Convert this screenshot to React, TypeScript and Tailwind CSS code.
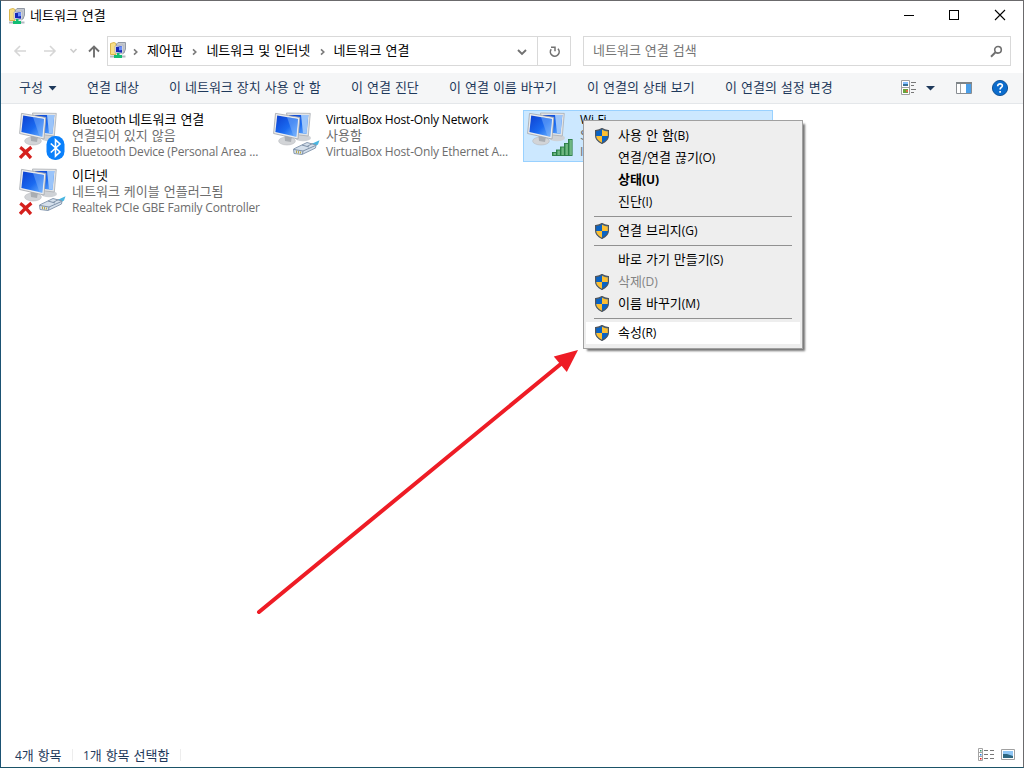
import type { ReactNode } from "react";

const crumbs = ["제어판", "네트워크 및 인터넷", "네트워크 연결"];

const commands = [
    { label: "연결 대상", width: "w-[82px]" },
    { label: "이 네트워크 장치 사용 안 함", width: "w-[182px]" },
    { label: "이 연결 진단", width: "w-[98px]" },
    { label: "이 연결 이름 바꾸기", width: "w-[138px]" },
    { label: "이 연결의 상태 보기", width: "w-[138px]" },
    { label: "이 연결의 설정 변경", width: "w-[120px]" },
];

const menuGroups = [
    [
        { label: "사용 안 함", hotkey: "(B)", shield: true },
        { label: "연결/연결 끊기", hotkey: "(O)" },
        { label: "상태", hotkey: "(U)", bold: true },
        { label: "진단", hotkey: "(I)" },
    ],
    [{ label: "연결 브리지", hotkey: "(G)", shield: true }],
    [
        { label: "바로 가기 만들기", hotkey: "(S)" },
        { label: "삭제", hotkey: "(D)", shield: true, disabled: true },
        { label: "이름 바꾸기", hotkey: "(M)", shield: true },
    ],
    [{ label: "속성", hotkey: "(R)", shield: true, active: true }],
] as {
    label: string;
    hotkey: string;
    shield?: boolean;
    bold?: boolean;
    disabled?: boolean;
    active?: boolean;
}[][];

function Latin({ children }: { children: ReactNode }) {
    return (
        <span className="font-['Open_Sans','Noto_Sans_CJK_KR',sans-serif] text-[12px] tracking-[-0.18px] [word-spacing:0px]">
            {children}
        </span>
    );
}

function AppIcon() {
    return (
        <svg width="17" height="17" viewBox="0 0 17 17" className="shrink-0">
            <path d="M0.5 1.5 L4 0.5 L6 1.5 V12.5 H0.5Z" fill="#f8df86" stroke="#d9b64e" />
            <path d="M6.5 2 L8 0.5 H15.5 V7 L14 11 H6.5Z" fill="#c4c8cf" stroke="#9299a4" />
            <path d="M5 4 L13 3 V12 L5 11Z" fill="#e8e8ee" stroke="#a5a9b1" strokeWidth="0.7" />
            <path d="M6 5 L12 4 V10.8 L6 10Z" fill="#1528b8" />
            <path d="M9 5 L12 4 V8 L9 8.5Z" fill="#6c90fa" />
            <path d="M0 13.5 H15.5 V15.5 H0Z" fill="#b3b9c1" />
            <path d="M7 11 H9.5 V13 H12 V16 H4 V13 H7Z" fill="#13bd73" />
        </svg>
    );
}

function Chevron({ className }: { className?: string }) {
    return (
        <svg width="6" height="8" viewBox="0 0 6 8" className={className}>
            <path d="M1 1.3 L3.8 4 L1 6.7" fill="none" stroke="#7a7a7a" strokeWidth="1.6" />
        </svg>
    );
}

function Shield() {
    return (
        <svg width="14" height="16" viewBox="0 0 14 16">
            <path
                d="M7 0.6 C8.6 1.8 10.6 2.5 13.4 2.6 V7.5 C13.4 11.4 10.7 13.7 7 15.4 C3.3 13.7 0.6 11.4 0.6 7.5 V2.6 C3.4 2.5 5.4 1.8 7 0.6Z"
                fill="#0a63c4"
                stroke="#50555b"
                strokeWidth="1.2"
            />
            <path d="M7 1.5 C8.5 2.6 10.3 3.2 12.8 3.3 V8 H7Z" fill="#fdbf31" />
            <path d="M7 8 V14.7 C3.9 13.2 1.4 11.3 1.2 8Z" fill="#fdbf31" />
        </svg>
    );
}

function Monitors() {
    return (
        <g>
            <ellipse cx="30" cy="26" rx="8" ry="3.2" fill="#cfd2d6" />
            <path d="M13.5 1 L37.3 1.4 L35.3 24 L17 22Z" fill="#e2e4e6" stroke="#a9adb2" strokeWidth="0.8" />
            <path d="M16 3 L35.3 3 L33.5 22 L18 20Z" fill="url(#screen)" />
            <path d="M28 3 H35.3 L33.5 21.5 L30 21Z" fill="#9ac4fa" />
            <ellipse cx="14" cy="29" rx="8.4" ry="4" fill="#d2d4d7" stroke="#b0b3b7" strokeWidth="0.5" />
            <path d="M11.5 23 L19 24 L18 30 L12 29Z" fill="#a9adb2" />
            <path d="M2.5 1.4 L26.8 5.4 L25 27 L0.6 21.5Z" fill="#ebecee" stroke="#a2a6ab" strokeWidth="0.8" />
            <path d="M4.2 3.5 L25 7 L23.3 24.8 L2.4 20Z" fill="url(#screen)" />
            <path d="M14 5.1 L25 7 L23.3 24.8 L20.5 24.2Z" fill="#7db2fa" fillOpacity="0.5" />
        </g>
    );
}

function RedCross() {
    return (
        <path
            d="M1.2 35.4 C4.5 37.5 8 41.5 12 46 M12.4 35.2 C8 38.5 4.5 42 1 45.8"
            fill="none"
            stroke="#d5201d"
            strokeWidth="3.4"
        />
    );
}

function Plug() {
    return (
        <g>
            <path d="M34 34 L46.5 28.2 L45 32.5 L39 36Z" fill="#48b5e0" />
            <path d="M20.5 37 L34 30.5 L43 33 L42.5 36 L29 42.5 L21 41.5Z" fill="#d4dfeb" stroke="#7e91a8" strokeWidth="0.9" />
            <path d="M21 37.5 L30 39 L42.5 33.5 M30 39 L29.5 42 M29 33 L36 35 M34 34.5 L39.5 31.5" fill="none" stroke="#7e91a8" strokeWidth="1" />
            <path d="M23.5 38.5 V41 M25.5 39 V41.5 M27.5 39.5 V41.5" stroke="#b5a33c" strokeWidth="0.9" />
        </g>
    );
}

function ConnectionIcon({ kind }: { kind: "bluetooth" | "ethernet" | "virtual" | "wifi" }) {
    return (
        <svg width="48" height="48" viewBox="0 0 48 48" className="shrink-0">
            <defs>
                <linearGradient id="screen" x1="0" y1="0" x2="1" y2="1">
                    <stop offset="0" stopColor="#0c3fd0" />
                    <stop offset="0.55" stopColor="#1a6af0" />
                    <stop offset="1" stopColor="#72b6ff" />
                </linearGradient>
                <linearGradient id="signal" x1="0" y1="0" x2="1" y2="0">
                    <stop offset="0" stopColor="#2f8f4f" />
                    <stop offset="1" stopColor="#a2d9ac" />
                </linearGradient>
            </defs>
            <Monitors />
            {(kind === "bluetooth" || kind === "ethernet") && <RedCross />}
            {(kind === "ethernet" || kind === "virtual") && <Plug />}
            {kind === "bluetooth" && (
                <g>
                    <rect x="27.5" y="24" width="18" height="24" rx="8.5" fill="#0a80fb" />
                    <path d="M31.8 31.5 L41 40 L36.5 44.2 V27.8 L41 32 L31.8 40.5" fill="none" stroke="#fff" strokeWidth="1.6" />
                </g>
            )}
            {kind === "wifi" && (
                <g fill="url(#signal)" stroke="#277b43" strokeWidth="0.9">
                    <rect x="25.5" y="40.5" width="3.6" height="3" />
                    <rect x="29.5" y="38" width="3.6" height="5.5" />
                    <rect x="33.5" y="35" width="3.6" height="8.5" />
                    <rect x="37.5" y="31.5" width="3.6" height="12" />
                    <rect x="41.5" y="27.5" width="3.6" height="16" />
                </g>
            )}
        </svg>
    );
}

function Connection({
    kind,
    name,
    status,
    device,
    selected,
}: {
    kind: "bluetooth" | "ethernet" | "virtual" | "wifi";
    name: ReactNode;
    status: string;
    device: string;
    selected?: boolean;
}) {
    return (
        <div
            className={`flex h-[52px] w-[250px] border pl-[3px] pt-px ${
                selected ? "border-[#99d1ff] bg-[#cce8ff]" : "border-transparent"
            }`}
        >
            <ConnectionIcon kind={kind} />
            <div className="-mt-px ml-[5px] whitespace-nowrap leading-4 text-[#6d6d6d]">
                <p className="h-4 text-black">{name}</p>
                <p className="h-4">{status}</p>
                <p className="h-4">
                    <Latin>{device}</Latin>
                </p>
            </div>
        </div>
    );
}

function ContextMenu() {
    return (
        <div className="absolute left-[583px] top-[120px] h-[229px] w-[220px] border border-[#a0a0a0] bg-[#eeeeee] px-0.5 py-1 shadow-[3px_3px_2px_-1px_rgba(0,0,0,0.55)]">
            {menuGroups.map((group, i) => (
                <div key={i}>
                    {i > 0 && (
                        <div className="h-[7px] px-2 pt-[3px]">
                            <div className="h-px bg-[#919191]" />
                        </div>
                    )}
                    {group.map((item) => (
                        <div
                            key={item.label}
                            className={`flex h-[22px] items-center pl-[9px] ${
                                item.active ? "bg-white" : ""
                            } ${item.disabled ? "text-[#838383]" : "text-black"} ${
                                item.bold ? "font-bold" : ""
                            }`}
                        >
                            <div className="w-[23px]">{item.shield && <Shield />}</div>
                            <span className="whitespace-nowrap pb-0.5 leading-5">
                                {item.label}
                                <span className="font-['Open_Sans',sans-serif] text-[12px]">{item.hotkey}</span>
                            </span>
                        </div>
                    ))}
                </div>
            ))}
        </div>
    );
}

function TitleBar() {
    return (
        <header className="flex h-[30px] items-center justify-between pl-2">
            <div className="flex items-center gap-1">
                <AppIcon />
                <span className="pb-0.5 leading-5">네트워크 연결</span>
            </div>
            <svg width="138" height="30" viewBox="885 1 138 30" fill="none" stroke="#000" shapeRendering="crispEdges">
                <path d="M904 15.5 H914" />
                <rect x="949.5" y="10.5" width="9" height="9" />
                <path d="M995 10 L1005 20 M1005 10 L995 20" shapeRendering="auto" strokeWidth="1.1" />
            </svg>
        </header>
    );
}

function AddressRow() {
    return (
        <div className="flex h-[42px] pt-[5px]">
            <svg width="106" height="30" viewBox="1 36 106 30" fill="none" strokeWidth="1.6" className="shrink-0">
                <path d="M26 51 H14.5 M20 46 L15 51 L20 56 M44 51 H55.5 M50 46 L55 51 L50 56" stroke="#d6d6d6" />
                <path d="M70.5 49 L73.5 52 L76.5 49" stroke="#cdcdcd" />
                <path d="M94 57.5 V46.5 M89 51.5 L94 46.5 L99 51.5" stroke="#6f6f6f" strokeWidth="1.9" />
            </svg>
            <div className="flex h-[30px] w-[464px] border border-[#d9d9d9]">
                <div className="flex flex-1 items-center pb-px pl-0.5">
                    <AppIcon />
                    {crumbs.map((crumb, i) => (
                        <div key={crumb} className="flex items-center">
                            <Chevron className={i === 0 ? "ml-[6px] mr-[8px] mt-[3px]" : "ml-[9.5px] mr-[8px] mt-[3px]"} />
                            <span className="pb-px leading-5">{crumb}</span>
                        </div>
                    ))}
                </div>
                <svg width="56" height="28" viewBox="514 37 56 28" fill="none" stroke="#717171">
                    <path d="M518 50 L522 54 L526 50" strokeWidth="1.9" />
                    <path d="M537.5 37 V65" stroke="#d9d9d9" />
                    <path d="M551.2 49.2 A4.4 4.4 0 1 0 558 48.8" strokeWidth="1.6" />
                    <path d="M551 47.2 H555 V51.2" strokeWidth="1.5" />
                </svg>
            </div>
            <div className="ml-3 flex h-[30px] w-[428px] items-center justify-between border border-[#d9d9d9] pb-px pl-[9px] pr-[7px] text-[#757575]">
                <span className="pb-px leading-5">네트워크 연결 검색</span>
                <svg width="13" height="13" viewBox="0 0 13 13" fill="none" stroke="#6f6f6f" className="mt-0.5">
                    <circle cx="8" cy="4.8" r="3.3" strokeWidth="1.6" />
                    <path d="M5.5 7.3 L1 11.8" strokeWidth="2" />
                </svg>
            </div>
        </div>
    );
}

function CommandBar() {
    return (
        <nav className="flex h-[31px] items-center border-b border-[#e4e7ea] bg-[#f5f6f7] pl-[18px] leading-5 text-[#1e395b]">
            <div className="flex w-[68px] items-center gap-[5px]">
                <span className="pb-0.5">구성</span>
                <svg width="9" height="5" viewBox="0 0 9 5">
                    <path d="M0.5 0 H8.5 L4.5 4.5Z" fill="#1e395b" />
                </svg>
            </div>
            {commands.map((c) => (
                <span key={c.label} className={`${c.width} whitespace-nowrap pb-0.5`}>
                    {c.label}
                </span>
            ))}
            <svg width="112" height="18" viewBox="900 79 112 18" className="ml-auto mr-[11px]" fill="none">
                <path d="M901.5 80.5 H909.5 V94.5 H901.5Z M901.5 87.5 H909.5" stroke="#a0a0a0" fill="#fff" />
                <path d="M903 82 H908 V84 H903Z" fill="#85bfff" />
                <path d="M903 84 H908 V86 H903Z" fill="#376f95" />
                <path d="M903 89 H908 V93 H903Z" fill="#69a33c" />
                <path d="M906 90 H908 V92 H906Z" fill="#dc7049" />
                <path d="M911 82.5 H916 M911 85.5 H914 M911 89.5 H916 M911 92.5 H914" stroke="#777" />
                <path d="M926 86 H935 L930.5 90.5Z" fill="#1e395b" />
                <path d="M956.5 82.5 H971.5 V93.5 H956.5Z" fill="#fff" stroke="#888d92" />
                <path d="M956 82 H972 V84 H956Z" fill="#7f8589" />
                <path d="M960.5 84 V93" stroke="#a1a5a8" />
                <path d="M966 84 H971 V93 H966Z" fill="#4a9ee8" />
                <circle cx="1000" cy="88" r="7.6" fill="#0b6ccd" stroke="#0a4b8d" strokeWidth="0.9" />
                <path d="M997.7 86.2 C997.7 82.9 1002.7 83.3 1002.3 86 C1002.1 87.5 1000.1 87.5 1000.1 89.6 M1000.1 91 V92.8" stroke="#fff" strokeWidth="1.7" />
            </svg>
        </nav>
    );
}

function StatusBar() {
    return (
        <footer className="flex h-6 items-center pl-[14px] pr-2 leading-5 text-[#1e395b]">
            <span className="w-[57px]"><Latin>4</Latin>개 항목</span>
            <i className="h-3 w-px bg-[#ededed]" />
            <span className="ml-[10px] w-[97px] whitespace-nowrap"><Latin>1</Latin>개 항목 선택함</span>
            <i className="h-3 w-px bg-[#ededed]" />
            <svg width="38" height="14" viewBox="977 748 38 14" className="ml-auto" fill="none">
                <path d="M978.5 748.5 H982.5 V760.5 H978.5Z M978.5 752.5 H982.5 M978.5 756.5 H982.5" stroke="#a4a4a4" />
                <path d="M984 750.5 H988 M990 750.5 H994 M984 754.5 H988 M990 754.5 H994 M984 758.5 H988 M990 758.5 H994" stroke="#777" />
                <path d="M980 750 H981.5 V751.5 H980Z" fill="#38966c" />
                <path d="M980 754 H981.5 V755.5 H980Z" fill="#2a80df" />
                <path d="M980 758 H981.5 V759.5 H980Z" fill="#e11" />
                <path d="M1001.5 749.5 H1014.5 V759.5 H1001.5Z" fill="#fff" stroke="#a0a0a0" />
                <path d="M1003 751 H1013 V758 H1003Z" fill="#8fc6f5" />
                <path d="M1003 754 L1007 754 L1013 756 V758 H1003Z" fill="#2d6680" />
            </svg>
        </footer>
    );
}

export default function App() {
    return (
        <div className="relative flex h-screen w-screen flex-col border border-b-[#1b5368] border-l-[#1b5273] border-r-[#6b6a6c] border-t-[#6b6a6c] bg-white font-['Noto_Sans_CJK_KR',sans-serif] text-[13px] text-black [word-spacing:1.1px]">
            <TitleBar />
            <AddressRow />
            <CommandBar />
            <main className="flex flex-1 gap-1 pl-[14px] pt-[6px]">
                <div className="flex flex-col gap-1">
                    <Connection
                        kind="bluetooth"
                        name={<><Latin>Bluetooth </Latin>네트워크 연결</>}
                        status="연결되어 있지 않음"
                        device="Bluetooth Device (Personal Area ..."
                    />
                    <Connection
                        kind="ethernet"
                        name="이더넷"
                        status="네트워크 케이블 언플러그됨"
                        device="Realtek PCIe GBE Family Controller"
                    />
                </div>
                <Connection
                    kind="virtual"
                    name={<Latin>VirtualBox Host-Only Network</Latin>}
                    status="사용함"
                    device="VirtualBox Host-Only Ethernet A..."
                />
                <Connection kind="wifi" name={<Latin>Wi-Fi</Latin>} status="S" device="I" selected />
            </main>
            <StatusBar />

            <div className="absolute -left-px -top-px">
                <ContextMenu />
                <svg width="1024" height="768" viewBox="0 0 1024 768" className="pointer-events-none">
                    <path d="M259 612 L562 363" stroke="#ee1c25" strokeWidth="4" strokeLinecap="round" />
                    <path d="M578 350 L553.8 356.5 L566.8 372Z" fill="#ee1c25" />
                </svg>
            </div>
        </div>
    );
}
